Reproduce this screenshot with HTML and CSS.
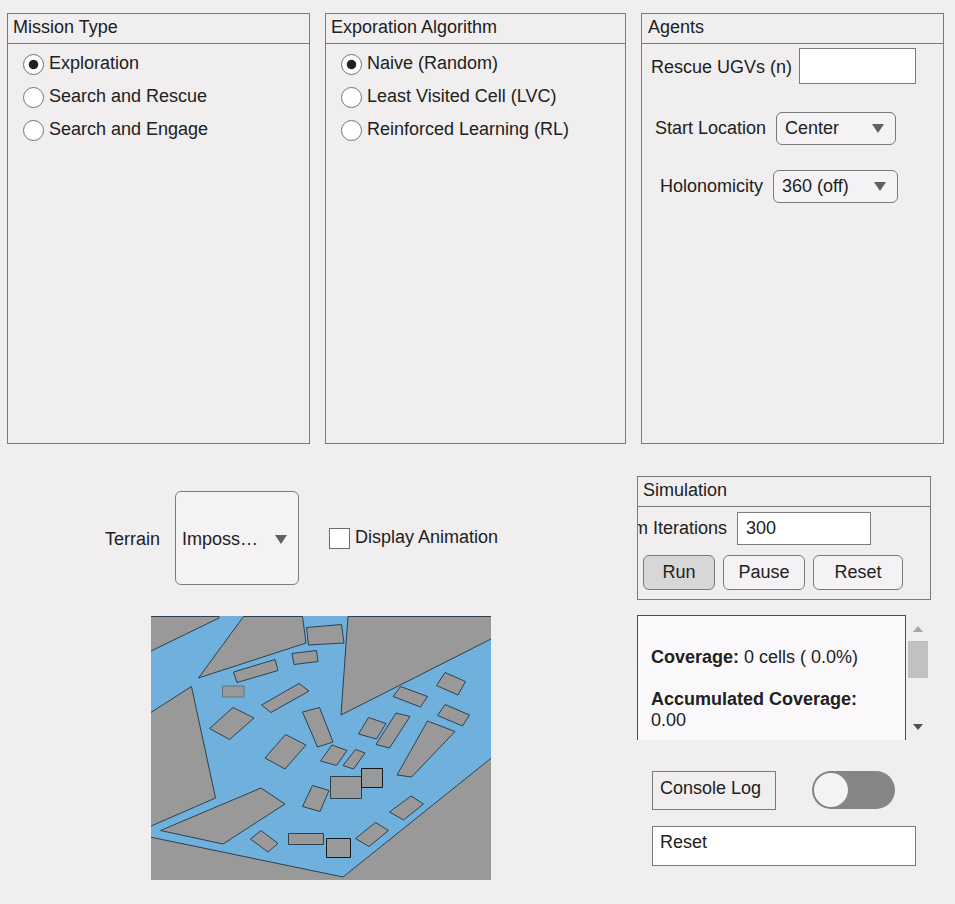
FILE: index.html
```html
<!DOCTYPE html>
<html lang="en">
<head>
<meta charset="utf-8">
<title>Mission Simulator</title>
<link rel="stylesheet" href="styles.css">
</head>
<body>
<main class="app">
  <div class="settings">
    <section class="panel mission">
      <h2 class="panel-title">Mission Type</h2>
      <div class="radios">
        <div class="radio"><span class="dot on"></span>Exploration</div>
        <div class="radio"><span class="dot"></span>Search and Rescue</div>
        <div class="radio"><span class="dot"></span>Search and Engage</div>
      </div>
    </section>
    <section class="panel algorithm">
      <h2 class="panel-title">Exporation Algorithm</h2>
      <div class="radios">
        <div class="radio"><span class="dot on"></span>Naive (Random)</div>
        <div class="radio"><span class="dot"></span>Least Visited Cell (LVC)</div>
        <div class="radio"><span class="dot"></span>Reinforced Learning (RL)</div>
      </div>
    </section>
    <section class="panel agents">
      <h2 class="panel-title">Agents</h2>
      <div class="field ugvs"><span class="label">Rescue UGVs (n)</span><span class="input"></span></div>
      <div class="field start"><span class="label">Start Location</span><span class="select">Center<i class="arrow"></i></span></div>
      <div class="field holo"><span class="label">Holonomicity</span><span class="select">360 (off)<i class="arrow"></i></span></div>
    </section>
  </div>
  <div class="lower">
    <div class="left">
      <div class="terrain">
        <span class="label">Terrain</span>
        <span class="select tall">Imposs…<i class="arrow"></i></span>
        <span class="check"><span class="box"></span>Display Animation</span>
      </div>
      <svg class="map" viewBox="151 616 340 264" width="340" height="264">
        <rect class="water" x="151" y="616" width="340" height="264"/>
        <g class="land">
          <path d="M150 616.5H219V618L150 651.5Z"/>
          <path d="M243.5 616.5H302.5L306 643L198.5 678Z"/>
          <path d="M348 616.5H492V638.5L341 715Z"/>
          <path d="M150 713L191.5 686.5L215.500 798L150 826.500Z"/>
          <path d="M150 837L343 877L492 757.500V881H150Z"/>
          <path d="M160.500 830.500L261 788L285 804L223 844Z"/>
          <path d="M306.500 627.500L341.500 624.500L344 643L308.500 645Z"/>
          <path d="M292 653.500L316.500 650.500L318 661.500L294 664.500Z"/>
          <path d="M233.500 672L275 659.500L278 670.500L237 682.500Z"/>
          <path class="soft" d="M222.500 686H244V697H222.500Z"/>
          <path d="M261.500 705L299 683.500L309 691L271 712.500Z"/>
          <path d="M209.500 728.500L233 707.500L254 718L229.500 739.500Z"/>
          <path d="M302.500 712L319.500 707.500L333 742L317.500 747Z"/>
          <path d="M285.500 734.500L306 745L285 769L265 758Z"/>
          <path d="M400.500 686.500L427.500 696.500L420.500 707L393 696.500Z"/>
          <path d="M445 672.500L465.500 681.500L458 695L436.500 685.500Z"/>
          <path d="M445 704.500L469.500 715L462.500 726L437.500 715.500Z"/>
          <path d="M368.500 717.500L386 723.500L376.500 739L358.500 734Z"/>
          <path d="M396 713L410 716.500L389.500 748L376 744.500Z"/>
          <path d="M427.500 721L455 731.500L411.500 777L397 775Z"/>
          <path d="M332 745L347 750.500L336.500 765.500L320.500 761Z"/>
          <path d="M355.500 749.500L365 753L353.500 769L343 765.500Z"/>
          <path d="M330.500 776.500H361.500V798.500H330.500Z"/>
          <path class="sharp" d="M361.500 768.500H382.500V787.500H361.500Z"/>
          <path d="M312.500 785.500L329 790.500L320 811.500L302.500 806.500Z"/>
          <path d="M411 796L423.500 804L403.500 820L389.500 812Z"/>
          <path d="M375.500 822.500L388.500 830.500L369 846.500L355.500 838.500Z"/>
          <path class="sharp" d="M326.500 838.500H350.500V857.500H326.500Z"/>
          <path d="M288.500 833.500H323.500V844.500H288.500Z"/>
          <path d="M261 830.500L278 843.500L268 852L250.500 839Z"/>
        </g>
      </svg>
    </div>
    <div class="right">
      <section class="panel simulation">
        <h2 class="panel-title">Simulation</h2>
        <div class="iterations"><span class="label">m Iterations</span><span class="input">300</span></div>
        <div class="buttons">
          <span class="button run">Run</span>
          <span class="button pause">Pause</span>
          <span class="button reset">Reset</span>
        </div>
      </section>
      <div class="results">
        <div class="output">
          <p><b>Coverage:</b> 0 cells ( 0.0%)</p>
          <p><b>Accumulated Coverage:</b><br>0.00</p>
        </div>
        <div class="scrollbar"><i class="up"></i><span class="thumb"></span><i class="down"></i></div>
      </div>
      <div class="console">
        <span class="log-label">Console Log</span>
        <span class="toggle"><span class="knob"></span></span>
      </div>
      <div class="log">Reset</div>
    </div>
  </div>
</main>
</body>
</html>
```
FILE: styles.css
```css
* { box-sizing: border-box; }

body {
  margin: 0;
  background: #f0eeef;
  color: #212121;
  font: 18px/20px "Liberation Sans", Arial, sans-serif;
  white-space: nowrap;
}

.app {
  width: 955px;
  height: 904px;
  padding: 13px 11px 0 7px;
  overflow: hidden;
}

.settings { display: flex; }

.panel { border: 1px solid #7b7b7b; }

.panel-title {
  height: 30px;
  margin: 0;
  padding: 3px 0 0 5px;
  border-bottom: 1px solid #7b7b7b;
  font-size: 18px;
  font-weight: normal;
}

.settings .panel { height: 431px; }
.mission { width: 303px; margin-right: 15px; }
.algorithm { width: 301px; margin-right: 15px; }
.agents { width: 303px; }
.agents .panel-title { padding-left: 6px; }

.radios { padding: 9px 0 0 15px; }
.radio { display: flex; gap: 5px; height: 33px; }

.dot {
  width: 21px;
  height: 21px;
  margin-top: 1px;
  border: 1.5px solid #737373;
  border-radius: 50%;
  background: #fff;
}
.on { background: radial-gradient(circle, #202020 4.2px, #fff 5.2px); }

.field { display: flex; align-items: center; }
.ugvs { height: 36px; margin-top: 4px; padding-left: 9px; }
.ugvs .label { width: 148px; padding-top: 2px; }
.ugvs .input { width: 117px; height: 36px; }
.start { height: 33px; margin-top: 28px; padding-left: 13px; }
.start .label { width: 121px; }
.start .select { width: 120px; }
.holo { height: 33px; margin-top: 25px; padding-left: 18px; }
.holo .label { width: 113px; }
.holo .select { width: 125px; }
.start .label, .start .select, .holo .label, .holo .select { padding-bottom: 1px; }

.input { border: 1px solid #7b7b7b; background: #fff; }

.select {
  display: flex;
  align-items: center;
  justify-content: space-between;
  height: 33px;
  padding: 0 11px 0 8px;
  border: 1px solid #7b7b7b;
  border-radius: 6px;
  background: #f4f2f5;
}

.arrow {
  border: 6px solid transparent;
  border-top: 9px solid #606060;
  border-bottom: 0;
}

.lower { display: flex; margin-top: 32px; }
.left { width: 630px; padding: 15px 0 0 98px; }

.terrain { display: flex; align-items: center; height: 94px; }
.terrain .label { width: 70px; padding-top: 1px; }
.terrain .tall { width: 124px; height: 94px; padding: 2px 11px 0 6px; }
.check { display: flex; align-items: flex-start; gap: 5px; margin-left: 30px; }
.box {
  width: 21px;
  height: 21px;
  margin-top: 1px;
  border: 1px solid #6c6c6c;
  background: #fff;
}

.map { display: block; margin: 31px 0 0 46px; }
.water { fill: #6fb0dc; }
.land { fill: #999; stroke: #2d4250; stroke-width: 1; }
.sharp { stroke: #111c22; }
.soft { stroke: #607583; }

.right { width: 307px; }
.simulation { width: 294px; height: 124px; overflow: hidden; }
.iterations { display: flex; align-items: center; height: 33px; margin: 5px 0 0 -5px; }
.iterations .label { width: 104px; padding-bottom: 1px; }
.iterations .input { width: 134px; height: 33px; padding: 5px 0 0 8px; }

.buttons { display: flex; gap: 8px; margin: 10px 0 0 5px; }
.button {
  height: 35px;
  padding-top: 6px;
  border: 1px solid #7b7b7b;
  border-radius: 6px;
  background: #f4f2f5;
  text-align: center;
}
.run { width: 72px; background: #d8d7d8; }
.pause { width: 82px; }
.reset { width: 90px; }

.results { display: flex; height: 125px; margin-top: 15px; }
.output {
  width: 269px;
  padding: 31px 0 0 13px;
  border: 1px solid #4b4b4b;
  border-bottom: 0;
  background: #faf8fb;
  line-height: 21px;
}
.output p { margin: 0 0 21px; }

.scrollbar {
  display: flex;
  flex-direction: column;
  align-items: center;
  width: 20px;
  margin-left: 2px;
  padding-top: 11px;
}
.scrollbar i { border: 5.5px solid transparent; }
.scrollbar .up { border-top: 0; border-bottom: 6px solid #a5a5a5; }
.scrollbar .down { margin-top: 46px; border-bottom: 0; border-top: 6px solid #505050; }
.thumb { width: 20px; height: 37px; margin-top: 9px; background: #c1c1c1; }

.console { display: flex; margin: 31px 0 0 15px; }
.log-label {
  width: 124px;
  height: 39px;
  padding: 6px 0 0 7px;
  border: 1px solid #7b7b7b;
}
.toggle {
  width: 83px;
  height: 38px;
  margin-left: 36px;
  padding: 2px;
  border-radius: 19px;
  background: #858585;
}
.knob {
  display: block;
  width: 34px;
  height: 34px;
  border-radius: 50%;
  background: #f4f2f5;
}

.log {
  width: 264px;
  height: 40px;
  margin: 16px 0 0 15px;
  padding: 5px 0 0 7px;
  border: 1px solid #7b7b7b;
  background: #fff;
}
```
